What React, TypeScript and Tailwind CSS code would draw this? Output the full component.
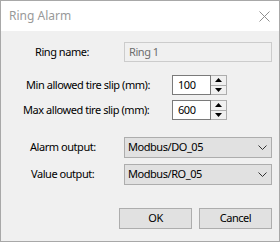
import React from 'react';

const font = "font-['Segoe_UI','Noto_Sans',sans-serif]";

const Spin = ({ value }: { value: string }) => (
  <div className="flex h-[20px]">
    <div className="w-[39px] h-full border border-[#7a7a7a] bg-white flex items-center pl-[5px] text-black">
      {value}
    </div>
    <div className="w-[16px] h-full flex flex-col border border-l-0 border-[#adadad] bg-[#f0f0f0]">
      <div className="flex-1 flex items-center justify-center border-b border-[#adadad]">
        <svg width="7" height="4" viewBox="0 0 7 4">
          <path d="M0 4 L3.5 0 L7 4 Z" fill="#000" />
        </svg>
      </div>
      <div className="flex-1 flex items-center justify-center">
        <svg width="7" height="4" viewBox="0 0 7 4">
          <path d="M0 0 L3.5 4 L7 0 Z" fill="#000" />
        </svg>
      </div>
    </div>
  </div>
);

const Combo = ({ value }: { value: string }) => (
  <div className="w-[148px] h-[21px] border border-[#adadad] bg-[#e1e1e1] flex items-center justify-between pl-[3px] pr-[4px] text-black">
    <span>{value}</span>
    <svg width="9" height="5" viewBox="0 0 9 5">
      <path d="M0.5 0.5 L4.5 4.5 L8.5 0.5" fill="none" stroke="#333" strokeWidth="1" />
    </svg>
  </div>
);

export default function App() {
  return (
    <div className={`w-[280px] h-[242px] border border-[#a8a8a8] flex flex-col ${font} text-black`}>
      {/* Title bar */}
      <div className="h-[30px] bg-white flex items-center justify-between pl-[8px] pr-[9px]">
        <span className="text-[12px] text-[#999999]">Ring Alarm</span>
        <svg width="11" height="11" viewBox="0 0 11 11">
          <path d="M0.5 0.5 L10.5 10.5 M10.5 0.5 L0.5 10.5" stroke="#8f8f8f" strokeWidth="1" />
        </svg>
      </div>

      <div className="flex-1 bg-[#f0f0f0] flex flex-col pt-[11px] text-[11px] tracking-[-0.45px] whitespace-nowrap">
        <div className="flex items-center h-[20px]">
          <span className="w-[123px] pl-[34px]">Ring name:</span>
          <div className="w-[148px] h-full border border-[#cccccc] bg-[#f0f0f0] flex items-center pl-[4px] text-[#6d6d6d]">
            Ring 1
          </div>
        </div>

        <div className="flex items-center h-[20px] mt-[13px]">
          <span className="w-[171px] pl-[25px]">Min allowed tire slip (mm):</span>
          <Spin value="100" />
        </div>

        <div className="flex items-center h-[20px] mt-[5px]">
          <span className="w-[171px] pl-[22px]">Max allowed tire slip (mm):</span>
          <Spin value="600" />
        </div>

        <div className="flex items-center h-[21px] mt-[17px]">
          <span className="w-[123px] pl-[29px]">Alarm output:</span>
          <Combo value="Modbus/DO_05" />
        </div>

        <div className="flex items-center h-[21px] mt-[6px]">
          <span className="w-[123px] pl-[30px]">Value output:</span>
          <Combo value="Modbus/RO_05" />
        </div>

        <div className="flex justify-end gap-[7px] pr-[7px] mt-[23px]">
          <button className="w-[73px] h-[21px] border border-[#adadad] bg-[#e1e1e1]">OK</button>
          <button className="w-[73px] h-[21px] border border-[#adadad] bg-[#e1e1e1]">Cancel</button>
        </div>
      </div>
    </div>
  );
}
